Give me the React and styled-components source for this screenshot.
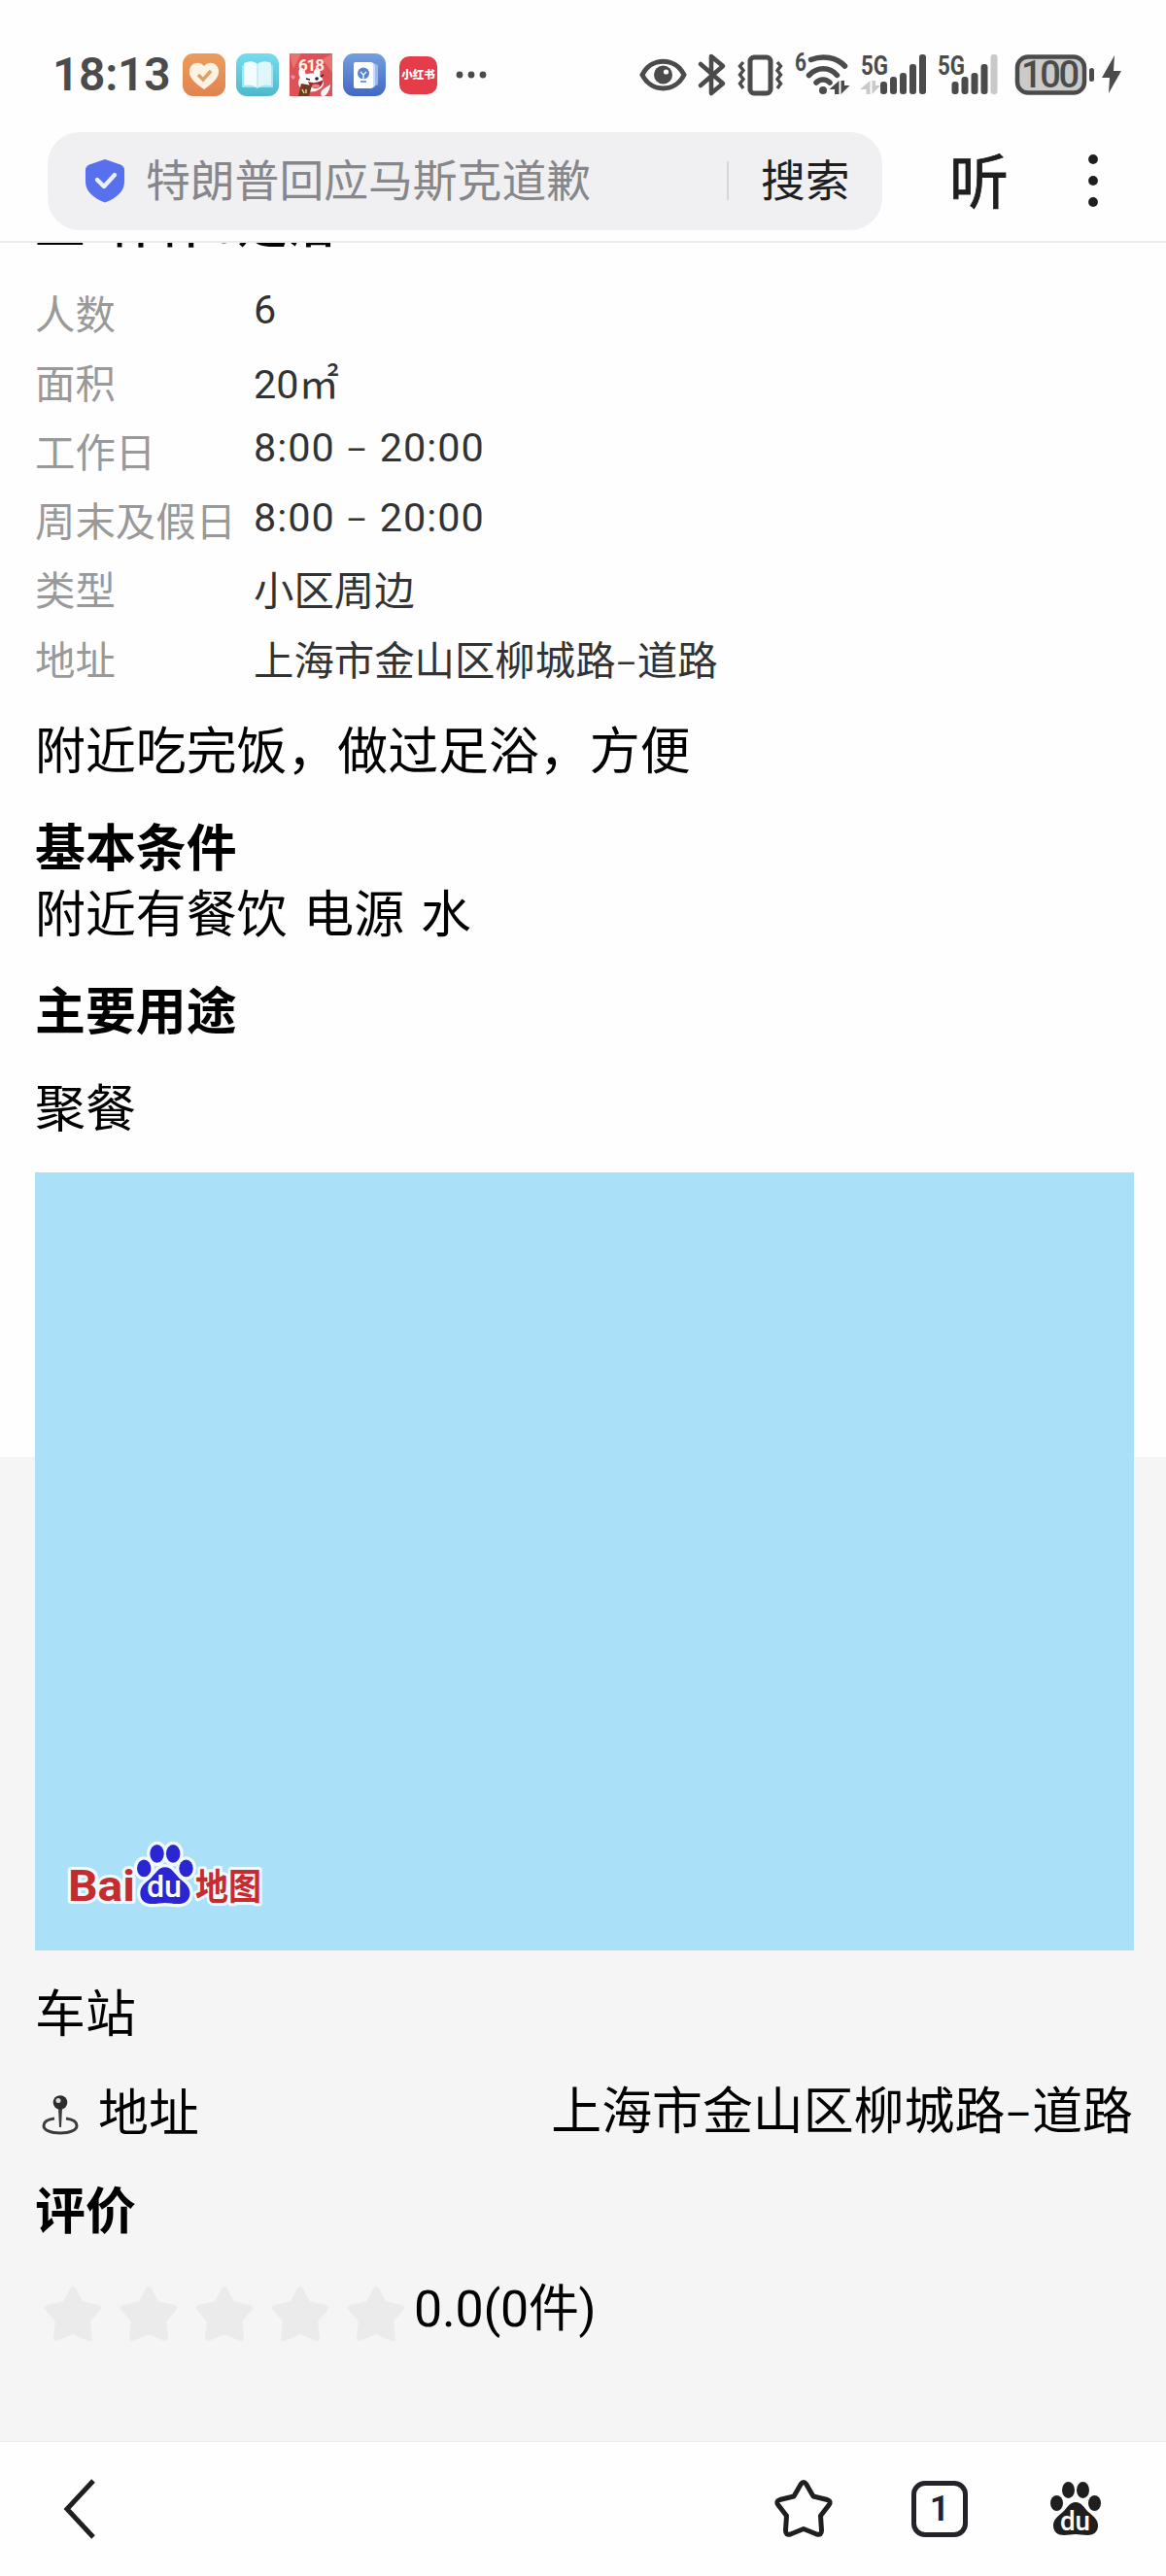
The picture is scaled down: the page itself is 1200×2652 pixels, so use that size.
import React from 'react';
import styled, { createGlobalStyle } from 'styled-components';

const address = <>上海市金山区柳城路<Dash>–</Dash>道路</>;
const hours = <>8:00 <Dash>–</Dash> 20:00</>;

const facts = [
  { label: '人数', value: '6', numeric: true },
  { label: '面积', value: '20㎡' },
  { label: '工作日', value: hours, numeric: true },
  { label: '周末及假日', value: hours, numeric: true },
  { label: '类型', value: '小区周边' },
  { label: '地址', value: address },
];

function Dash({ children }) {
  return <ShortDash>{children}</ShortDash>;
}

function StatusIcons() {
  return (
    <>
      <Clock>18:13</Clock>
      <AppIcons>
        <svg width="44" height="44" viewBox="0 0 44 44">
          <defs>
            <linearGradient id="orange" x1="0" y1="0" x2="0" y2="1">
              <stop offset="0" stopColor="#eb9c5c" />
              <stop offset="1" stopColor="#e18450" />
            </linearGradient>
          </defs>
          <rect width="44" height="44" rx="11" fill="url(#orange)" />
          <path d="M22 37 C10 29 6 23 7 17 C8 10 17 7 22 13 C27 7 36 10 37 17 C38 23 34 29 22 37Z" fill="#fdf3e2" />
          <path d="M16 22 L21 27 L29 18" fill="none" stroke="#dca066" strokeWidth="3.4" />
        </svg>
        <svg width="44" height="44" viewBox="0 0 44 44">
          <defs>
            <linearGradient id="aqua" x1="0" y1="0" x2="0" y2="1">
              <stop offset="0" stopColor="#74dced" />
              <stop offset="1" stopColor="#4fb8cb" />
            </linearGradient>
          </defs>
          <rect width="44" height="44" rx="11" fill="url(#aqua)" />
          <path d="M6 12 H38 V35 H6Z" fill="#a5e5ee" />
          <path d="M22 11 C18 7 12 8 8 10 V33 C13 32 18 32 22 36Z" fill="#f2fdff" />
          <path d="M22 11 C26 7 32 8 36 10 V33 C31 32 26 32 22 36Z" fill="#dff6fa" />
          <path d="M22 11 V35" stroke="#bfe6ee" strokeWidth="1.4" />
        </svg>
        <svg width="44" height="44" viewBox="0 0 44 44">
          <rect width="44" height="44" fill="#de5257" />
          <path d="M0 0 L12 0 L4 16Z M44 0 L44 20 L34 6Z" fill="#e8756b" />
          <ellipse cx="13" cy="21" rx="3.5" ry="6" fill="#fff" transform="rotate(-12 13 21)" />
          <ellipse cx="28" cy="21" rx="3.5" ry="6" fill="#fff" transform="rotate(8 28 21)" />
          <text x="9" y="18" fontSize="17" fontWeight="700" fill="#fff3e6" textLength="27">618</text>
          <ellipse cx="22" cy="30" rx="13" ry="9.5" fill="#fff" />
          <path d="M33 44 C30 38 36 36 42 32 C41 40 38 42 36 44Z" fill="#fff" />
          <path d="M19 29 Q27 32 35 27 Q33 36 27 36 Q21 36 19 29Z" fill="#a3242c" />
          <ellipse cx="27" cy="33.5" rx="4" ry="2" fill="#f08078" />
          <circle cx="28" cy="26" r="1.8" fill="#222" />
          <path d="M17 26 L21 27 M32 24 L35 22" stroke="#222" strokeWidth="1.4" />
          <path d="M12 31 L23 33 L20 44 H9Z" fill="#6b3c20" />
          <path d="M13 37 L15 41 M17 37 V41" stroke="#f0d79f" strokeWidth="1.4" />
          <path d="M3 22 L6 24 L4 27 L1 24Z" fill="#f78ab4" />
        </svg>
        <svg width="44" height="44" viewBox="0 0 44 44">
          <defs>
            <linearGradient id="blue" x1="0" y1="0" x2="0" y2="1">
              <stop offset="0" stopColor="#739fe0" />
              <stop offset="1" stopColor="#4268c4" />
            </linearGradient>
          </defs>
          <rect width="44" height="44" rx="11" fill="url(#blue)" />
          <rect x="16" y="11" width="20" height="22" rx="2" fill="#9db8ec" />
          <rect x="14" y="10" width="19" height="25" rx="2" fill="#cbdaf7" />
          <rect x="11" y="9" width="20" height="27" rx="2" fill="#fff" />
          <circle cx="21" cy="20.5" r="6" fill="#5b84d0" />
          <path d="M18 19 L21 22 L24 19 M21 22 V27" fill="none" stroke="#fff" strokeWidth="1.3" />
          <path d="M18 29 H24" stroke="#5b84d0" strokeWidth="1.6" />
        </svg>
      </AppIcons>
      <RedBook>小红书</RedBook>
      <svg width="32" height="8" viewBox="0 0 32 8" fill="#4b4b4b">
        <circle cx="4" cy="4" r="3.4" />
        <circle cx="16" cy="4" r="3.4" />
        <circle cx="28" cy="4" r="3.4" />
      </svg>
    </>
  );
}

function SystemIcons() {
  return (
    <SystemGroup>
      <svg width="49" height="44" viewBox="0 0 49 44">
        <path d="M3 22 C12 3.500 37 3.500 46 22 C37 40.500 12 40.500 3 22Z" fill="none" stroke="#4b4b4b" strokeWidth="5" />
        <circle cx="24.500" cy="22" r="9.500" fill="#4b4b4b" />
        <circle cx="27.500" cy="19" r="2.600" fill="#fff" />
      </svg>
      <svg width="28" height="44" viewBox="0 0 28 44">
        <path d="M2 11 L25 31 L13 41 V3 L25 13 L2 33" fill="none" stroke="#4b4b4b" strokeWidth="4.600" strokeLinejoin="round" strokeLinecap="round" />
      </svg>
      <svg width="47" height="44" viewBox="0 0 47 44" fill="none" stroke="#4b4b4b">
        <rect x="13" y="4" width="21" height="37" rx="4" strokeWidth="5" />
        <path d="M6 9 L2.500 13 L6 17.500 L2.500 22 L6 26.500 L2.500 31 L6 36" strokeWidth="3.400" />
        <path d="M41 9 L44.500 13 L41 17.500 L44.500 22 L41 26.500 L44.500 31 L41 36" strokeWidth="3.400" />
      </svg>
      <svg width="56" height="44" viewBox="0 0 56 44">
        <text x="0" y="18" fontSize="25" fontWeight="700" fill="#4b4b4b" textLength="12" lengthAdjust="spacingAndGlyphs">6</text>
        <g fill="none" stroke="#4b4b4b" strokeWidth="5.500" strokeLinecap="round">
          <path d="M16.500 6.500 C29 1.500 43 4 51.500 13" />
          <path d="M14.500 22.500 C23 13.500 36 13.500 43.500 22.500" />
          <path d="M22 30 C26 26 32 26 36 30" />
        </g>
        <circle cx="29" cy="38" r="4" fill="#4b4b4b" />
        <path d="M45.500 28 V42 H41 V37 H35.500Z M47.500 42 V28 H51 V33 H56.500Z" fill="#4b4b4b" />
      </svg>
      <Signal>
        <text x="0" y="22" fontSize="28" fontWeight="700" fill="#4b4b4b" textLength="28" lengthAdjust="spacingAndGlyphs">5G</text>
        <path d="M9.500 28 V42 H5.500 V37 H-1Z M11.500 42 V28 H15 V33 H20Z" fill="#c9c9c9" />
        <Bar x="20" y="29" height="13" />
        <Bar x="30" y="24" height="18" />
        <Bar x="40" y="20" height="22" />
        <Bar x="50" y="11" height="31" />
        <Bar x="60" y="1" height="41" />
      </Signal>
      <Signal>
        <text x="0" y="22" fontSize="28" fontWeight="700" fill="#4b4b4b" textLength="28" lengthAdjust="spacingAndGlyphs">5G</text>
        <Bar x="14.500" y="29" height="13" />
        <Bar x="24.500" y="24" height="18" />
        <Bar x="34.500" y="20" height="22" />
        <Bar x="44.500" y="11" height="31" />
        <Bar x="54.500" y="1" height="41" $dim />
      </Signal>
      <svg width="110" height="44" viewBox="0 0 110 44">
        <rect x="3" y="3.500" width="69" height="37" rx="11" fill="#cacaca" stroke="#4b4b4b" strokeWidth="4.500" />
        <text x="7" y="35" fontSize="38" fontWeight="500" fill="#4b4b4b" textLength="60">100</text>
        <rect x="77" y="15" width="5" height="14" rx="2.500" fill="#4b4b4b" />
        <path d="M103 2 L90 25 H98 L97 41 L110 18 H102Z" fill="#4b4b4b" />
      </svg>
    </SystemGroup>
  );
}

function Paw({ fill }) {
  return (
    <g fill={fill}>
      <ellipse cx="6.500" cy="22" rx="6.500" ry="8" />
      <ellipse cx="18.500" cy="8.500" rx="6.500" ry="8.500" />
      <ellipse cx="33.500" cy="8.500" rx="6.500" ry="8.500" />
      <ellipse cx="45.500" cy="22" rx="6.500" ry="8" />
      <path d="M26 21 C32 21 35 27 39 31 C45 36 49 39 49 45 C49 52 44 55 38 55 C33 55 30 54 26 54 C22 54 19 55 14 55 C8 55 3 52 3 45 C3 39 7 36 13 31 C17 27 20 21 26 21Z" />
    </g>
  );
}

function BaiduMapLogo() {
  return (
    <svg width="210" height="76" viewBox="-4 -4 210 76">
      <g transform="translate(70 3) scale(1.110)" stroke="#f1fafe" strokeWidth="6">
        <Paw fill="#f1fafe" />
      </g>
      <LogoText x="-1" y="61" fontSize="44" textLength="69">Bai</LogoText>
      <LogoText x="130" y="60" fontSize="37" textLength="68">地图</LogoText>
      <g transform="translate(70 3) scale(1.110)"><Paw fill="#2a26d3" /></g>
      <text x="80" y="57" fontSize="31" fontWeight="500" fill="#fff" textLength="36" lengthAdjust="spacingAndGlyphs">du</text>
    </svg>
  );
}

function RatingStar() {
  return (
    <svg width="60" height="58" viewBox="0 0 60 58">
      <path
        d="M30 4 L38 19 L56 23 L45 36 L47 54 L30 47 L13 54 L15 36 L4 23 L22 19Z"
        fill="#ebebeb"
        stroke="#ebebeb"
        strokeWidth="6"
        strokeLinejoin="round"
      />
    </svg>
  );
}

function App() {
  return (
    <Phone>
      <GlobalStyle />
      <StatusBar>
        <StatusIcons />
        <SystemIcons />
      </StatusBar>
      <SearchRow>
        <SearchBox>
          <svg width="42" height="46" viewBox="0 0 42 46">
            <path d="M21 1 L37 6.500 Q41 8 41 12 V24 C41 34 33 41 21 45.500 C9 41 1 34 1 24 V12 Q1 8 5 6.500Z" fill="#5670ee" />
            <path d="M13 22 L20 29 L31 17" fill="none" stroke="#eef0fd" strokeWidth="4.400" strokeLinecap="round" strokeLinejoin="round" />
          </svg>
          <Placeholder>特朗普回应马斯克道歉</Placeholder>
          <Divider />
          <SearchButton>搜索</SearchButton>
        </SearchBox>
        <Listen>听</Listen>
        <svg width="10" height="56" viewBox="0 0 10 56" fill="#1f1f1f">
          <circle cx="5" cy="6" r="4.900" />
          <circle cx="5" cy="28" r="4.900" />
          <circle cx="5" cy="50" r="4.900" />
        </svg>
      </SearchRow>

      <Main>
        <Title><span>上</span>什什6足浴</Title>
        <Facts>
          {facts.map((fact) => (
            <Fact key={fact.label}>
              <Label>{fact.label}</Label>
              <Value $numeric={fact.numeric}>{fact.value}</Value>
            </Fact>
          ))}
        </Facts>
        <Text $top="29px">附近吃完饭，做过足浴，方便</Text>
        <Heading>基本条件</Heading>
        <Text $top="0">附近有餐饮 电源 水</Text>
        <Heading>主要用途</Heading>
        <Text>聚餐</Text>
        <MapBox>
          <BaiduMapLogo />
        </MapBox>
        <Text $top="33px">车站</Text>
        <AddressRow>
          <svg width="38" height="42" viewBox="0 0 38 42">
            <path d="M13 25 C5 26 2 29 2 32.500 C2 37 9 40 19 40 C29 40 36 37 36 32.500 C36 29 33 26 25 25" fill="none" stroke="#3c3c3c" strokeWidth="3" />
            <path d="M17 14 H21 L20 34 H18Z" fill="#3c3c3c" />
            <circle cx="19" cy="8.500" r="7.300" fill="#2d2d2d" />
            <circle cx="17" cy="6.500" r="2.500" fill="#dcdcdc" />
          </svg>
          <span>地址</span>
          <Address>{address}</Address>
        </AddressRow>
        <Heading>评价</Heading>
        <Rating>
          <Stars>
            {[1, 2, 3, 4, 5].map((n) => <RatingStar key={n} />)}
          </Stars>
          <Score>0.0(0件)</Score>
        </Rating>
      </Main>

      <BottomBar>
        <Back>
          <svg width="34" height="64" viewBox="0 0 34 64">
            <path d="M31 3 L4 32 L31 61" fill="none" stroke="#1f1f1f" strokeWidth="5" />
          </svg>
        </Back>
        <svg width="60" height="60" viewBox="0 0 60 60">
          <path
            d="M27.200 4.500 Q30 0.500 32.800 4.500 L40 17 L54.500 20.500 Q59 22 56 26 L47.500 37 L48.500 52 Q48.500 57.500 43.500 56 L30 50.500 L16.500 56 Q11.500 57.500 11.500 52 L12.500 37 L4 26 Q1 22 5.500 20.500 L20 17Z"
            fill="none"
            stroke="#1f1f1f"
            strokeWidth="5"
            strokeLinejoin="round"
          />
        </svg>
        <TabCount>1</TabCount>
        <svg width="52" height="56" viewBox="0 0 52 56">
          <Paw fill="#1f1f1f" />
          <text x="10" y="50" fontSize="27" fontWeight="500" fill="#fff" textLength="31" lengthAdjust="spacingAndGlyphs">du</text>
        </svg>
      </BottomBar>
    </Phone>
  );
}

const GlobalStyle = createGlobalStyle`
body {
  margin: 0;
  background: #fff;
}

svg {
  display: block;
  flex-shrink: 0;
  overflow: visible;
}
`;

const Phone = styled.div`
  display: flex;
  flex-direction: column;
  width: 1200px;
  height: 2652px;
  overflow: hidden;
  background: #fefefe;
  color: #000;
  font-family: Roboto, "Noto Sans CJK SC", sans-serif;
`;

const StatusBar = styled.div`
  box-sizing: border-box;
  display: flex;
  align-items: center;
  height: 117px;
  padding: 37px 46px 0 54px;
`;

const Clock = styled.div`
  width: 134px;
  font-size: 48px;
  font-weight: 600;
  line-height: 60px;
  letter-spacing: -0.3px;
  color: #4b4b4b;
`;

const AppIcons = styled.div`
  display: flex;
  gap: 11px;
`;

const RedBook = styled.div`
  width: 39px;
  height: 39px;
  margin: 0 19px 0 14px;
  border-radius: 10px;
  background: #e53c49;
  color: #fff;
  font-size: 11.500px;
  font-weight: 900;
  line-height: 39px;
  text-align: center;
`;

const SystemGroup = styled.div`
  display: flex;
  gap: 12px;
  margin-left: auto;
`;

const Signal = styled.svg.attrs({ viewBox: '0 0 67 44' })`
  width: 67px;
  height: 44px;
`;

const Bar = styled.rect.attrs({ width: 7, rx: 3 })`
  fill: ${({ $dim }) => ($dim ? '#c9c9c9' : '#4b4b4b')};
`;

const LogoText = styled.text.attrs({ lengthAdjust: 'spacingAndGlyphs' })`
  font-weight: 700;
  fill: #c62b30;
  stroke: #f1fafe;
  stroke-width: 6px;
  stroke-linejoin: round;
  paint-order: stroke;
`;

const SearchRow = styled.div`
  box-sizing: border-box;
  display: flex;
  align-items: center;
  height: 133px;
  padding: 7px 70px 0 49px;
  border-bottom: 2px solid #ebebeb;
`;

const SearchBox = styled.div`
  box-sizing: border-box;
  display: flex;
  align-items: center;
  width: 859px;
  height: 101px;
  padding-left: 38px;
  border-radius: 33px;
  background: #f0f0f2;
  font-size: 45.800px;
  line-height: 60px;
`;

const Placeholder = styled.div`
  width: 598px;
  margin-left: 21px;
  padding-top: 4px;
  color: #86868b;
`;

const Divider = styled.div`
  width: 2px;
  height: 40px;
  margin-right: 33px;
  background: #d6d6da;
`;

const SearchButton = styled.div`
  padding-top: 4px;
  color: #1f1f1f;
`;

const Listen = styled.div`
  margin: 0 auto 0 69px;
  padding-top: 5px;
  font-size: 61px;
  font-weight: 400;
  line-height: 70px;
  color: #1f1f1f;
  -webkit-text-stroke: 0.8px #1f1f1f;
`;

const Main = styled.div`
  flex: 1;
  min-height: 0;
  overflow: hidden;
  padding: 0 34px 0 36px;
  background: linear-gradient(#fefefe 1250px, #f5f5f5 1250px);
`;

const Title = styled.div`
  margin-top: -37px;
  font-size: 51.600px;
  font-weight: 500;
  line-height: 40px;

  span {
    margin-right: 24px;
  }
`;

const Facts = styled.div`
  margin-top: 32px;
  font-size: 41.400px;
`;

const Fact = styled.div`
  display: flex;
  align-items: center;
  height: 71.200px;
`;

const Label = styled.div`
  width: 225px;
  color: #999;
`;

const Value = styled.div`
  padding-bottom: ${({ $numeric }) => ($numeric ? '3px' : '0')};
  letter-spacing: ${({ $numeric }) => ($numeric ? '1px' : '0')};
  color: #333;
`;

const ShortDash = styled.span`
  font-size: 0.82em;
`;

const Text = styled.div`
  margin-top: ${({ $top }) => $top || '32px'};
  font-size: 51.900px;
  line-height: 68px;
  word-spacing: 4px;
`;

const Heading = styled(Text)`
  font-weight: 700;
`;

const MapBox = styled.div`
  box-sizing: border-box;
  display: flex;
  align-items: flex-end;
  width: 1131px;
  height: 801px;
  margin-top: 30px;
  padding: 0 0 40px 31px;
  background: #abe1f8;
`;

const AddressRow = styled(Text)`
  display: flex;
  align-items: center;

  svg {
    margin: 0 20px 0 7px;
  }
`;

const Address = styled.span`
  margin-left: auto;
`;

const Rating = styled(Text)`
  display: flex;
`;

const Stars = styled.div`
  display: flex;
  gap: 18px;
  padding: 9px 9px 0;
`;

const Score = styled.div`
  letter-spacing: -0.200px;
`;

const BottomBar = styled.div`
  box-sizing: border-box;
  display: flex;
  align-items: center;
  gap: 81px;
  height: 139px;
  padding: 0 67px 0 65px;
  border-top: 1px solid #ebebeb;
  background: #fefefe;
`;

const Back = styled.div`
  flex: 1;
`;

const TabCount = styled.div`
  box-sizing: border-box;
  width: 58px;
  height: 58px;
  margin-right: 4px;
  border: 5px solid #23232a;
  border-radius: 14px;
  color: #23232a;
  font-size: 36px;
  font-weight: 600;
  line-height: 49px;
  text-align: center;
`;

export default App;
